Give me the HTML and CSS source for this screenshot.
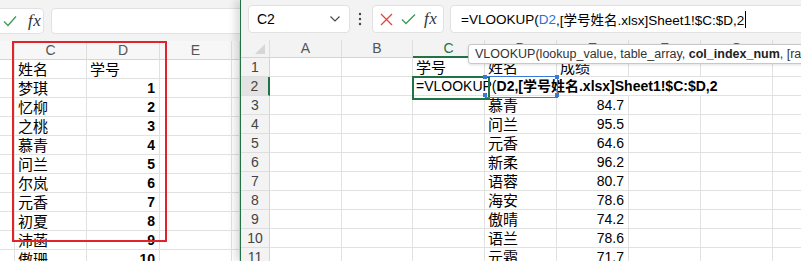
FILE: index.html
```html
<!DOCTYPE html>
<html lang="zh-CN">
<head>
    <meta charset="UTF-8">
    <title>VLOOKUP 跨工作簿</title>
    <link rel="stylesheet" href="styles.css">
</head>
<body>
<div class="screen">

    <!-- Left workbook: 学号姓名.xlsx -->
    <div class="win win-left">
        <div class="fbar">
            <div class="fx-box">
                <svg class="ico" width="14" height="12" viewBox="0 0 14 12"><path d="M1 6.5 L5 10.5 L13 1.5" fill="none" stroke="#3a9a55" stroke-width="1.3"/></svg>
                <span class="fx">fx</span>
            </div>
            <div class="f-input"></div>
        </div>
        <div class="grid grid-left">
            <div class="hd"></div><div class="hd">C</div><div class="hd">D</div><div class="hd">E</div><div class="hd"></div>

            <div class="c"></div><div class="c cjk">姓名</div><div class="c cjk">学号</div><div class="c"></div><div class="c"></div>
            <div class="c"></div><div class="c cjk">梦琪</div><div class="c num bold">1</div><div class="c"></div><div class="c"></div>
            <div class="c"></div><div class="c cjk">忆柳</div><div class="c num bold">2</div><div class="c"></div><div class="c"></div>
            <div class="c"></div><div class="c cjk">之桃</div><div class="c num bold">3</div><div class="c"></div><div class="c"></div>
            <div class="c"></div><div class="c cjk">慕青</div><div class="c num bold">4</div><div class="c"></div><div class="c"></div>
            <div class="c"></div><div class="c cjk">问兰</div><div class="c num bold">5</div><div class="c"></div><div class="c"></div>
            <div class="c"></div><div class="c cjk">尔岚</div><div class="c num bold">6</div><div class="c"></div><div class="c"></div>
            <div class="c"></div><div class="c cjk">元香</div><div class="c num bold">7</div><div class="c"></div><div class="c"></div>
            <div class="c"></div><div class="c cjk">初夏</div><div class="c num bold">8</div><div class="c"></div><div class="c"></div>
            <div class="c"></div><div class="c cjk">沛菡</div><div class="c num bold">9</div><div class="c"></div><div class="c"></div>
            <div class="c"></div><div class="c cjk">傲珊</div><div class="c num bold">10</div><div class="c"></div><div class="c"></div>
        </div>
        <div class="mark-red"></div>
    </div>

    <!-- Right workbook: 成绩 -->
    <div class="win win-right">
        <div class="fbar">
            <div class="namebox">
                <span>C2</span>
                <svg width="12" height="8" viewBox="0 0 12 8"><path d="M1.5 1.5 L6 6 L10.5 1.5" fill="none" stroke="#444" stroke-width="1.1"/></svg>
            </div>
            <svg class="dots" width="4" height="16" viewBox="0 0 4 16"><circle cx="2" cy="3" r="1.2" fill="#444"/><circle cx="2" cy="8" r="1.2" fill="#444"/><circle cx="2" cy="13" r="1.2" fill="#444"/></svg>
            <div class="fx-box fx-box-r">
                <svg class="ico" width="13" height="13" viewBox="0 0 13 13"><path d="M1 1 L12 12 M12 1 L1 12" fill="none" stroke="#e0453f" stroke-width="1.3"/></svg>
                <svg class="ico" width="15" height="12" viewBox="0 0 15 12"><path d="M1 6.5 L5 10.5 L14 1.5" fill="none" stroke="#3a9a55" stroke-width="1.3"/></svg>
                <span class="fx">fx</span>
            </div>
            <div class="f-input f-input-r">=VLOOKUP(<span class="ref">D2</span>,[学号姓名.xlsx]Sheet1!$C:$D,2<span class="caret"></span></div>
        </div>

        <div class="tip">VLOOKUP(lookup_value, table_array, <b>col_index_num</b>, [range_lookup])</div>

        <div class="grid grid-right">
            <div class="hd corner"><span class="tri"></span></div>
            <div class="hd">A</div><div class="hd">B</div><div class="hd hd-sel">C</div><div class="hd">D</div><div class="hd">E</div><div class="hd">F</div><div class="hd">G</div><div class="hd">H</div>

            <div class="rh">1</div><div class="c"></div><div class="c"></div><div class="c cjk">学号</div><div class="c cjk">姓名</div><div class="c cjk">成绩</div><div class="c"></div><div class="c"></div><div class="c"></div>
            <div class="rh rh-sel">2</div><div class="c"></div><div class="c"></div>
            <div class="c edit">=VLOOKUP(<b>D2,[学号姓名.xlsx]Sheet1!$C:$D,2</b>
                <i class="hdl hdl-tl"></i><i class="hdl hdl-tr"></i><i class="hdl hdl-bl"></i><i class="hdl hdl-br"></i>
            </div>
            <div class="c"></div><div class="c"></div>
            <div class="rh">3</div><div class="c"></div><div class="c"></div><div class="c"></div><div class="c cjk">慕青</div><div class="c num">84.7</div><div class="c"></div><div class="c"></div><div class="c"></div>
            <div class="rh">4</div><div class="c"></div><div class="c"></div><div class="c"></div><div class="c cjk">问兰</div><div class="c num">95.5</div><div class="c"></div><div class="c"></div><div class="c"></div>
            <div class="rh">5</div><div class="c"></div><div class="c"></div><div class="c"></div><div class="c cjk">元香</div><div class="c num">64.6</div><div class="c"></div><div class="c"></div><div class="c"></div>
            <div class="rh">6</div><div class="c"></div><div class="c"></div><div class="c"></div><div class="c cjk">新柔</div><div class="c num">96.2</div><div class="c"></div><div class="c"></div><div class="c"></div>
            <div class="rh">7</div><div class="c"></div><div class="c"></div><div class="c"></div><div class="c cjk">语蓉</div><div class="c num">80.7</div><div class="c"></div><div class="c"></div><div class="c"></div>
            <div class="rh">8</div><div class="c"></div><div class="c"></div><div class="c"></div><div class="c cjk">海安</div><div class="c num">78.6</div><div class="c"></div><div class="c"></div><div class="c"></div>
            <div class="rh">9</div><div class="c"></div><div class="c"></div><div class="c"></div><div class="c cjk">傲晴</div><div class="c num">74.2</div><div class="c"></div><div class="c"></div><div class="c"></div>
            <div class="rh">10</div><div class="c"></div><div class="c"></div><div class="c"></div><div class="c cjk">语兰</div><div class="c num">78.6</div><div class="c"></div><div class="c"></div><div class="c"></div>
            <div class="rh">11</div><div class="c"></div><div class="c"></div><div class="c"></div><div class="c cjk">元霜</div><div class="c num">71.7</div><div class="c"></div><div class="c"></div><div class="c"></div>
        </div>
    </div>

</div>
</body>
</html>
```

FILE: styles.css
```css
* {
    margin: 0;
    padding: 0;
    box-sizing: border-box;
}

body {
    width: 801px;
    height: 261px;
    overflow: hidden;
    background: #fff;
    font-family: "Liberation Sans", "Noto Sans CJK SC", sans-serif;
    color: #000;
}

.screen {
    display: flex;
    width: 801px;
    height: 261px;
    overflow: hidden;
}

.win {
    position: relative;
    background: #f3f3f3;
    overflow: hidden;
}

.win-left {
    width: 240px;
    flex: none;
}

.win-right {
    flex: 1;
    border-left: 1px solid #217346;
    box-shadow: -5px 0 7px rgba(0, 0, 0, 0.13);
}

/* Formula bar */
.fbar {
    display: flex;
    align-items: center;
    height: 41px;
    padding: 8px 0 7px 0;
}

.win-right .fbar {
    height: 40px;
    padding: 5px 0 7px 7px;
}

.fx-box {
    display: flex;
    align-items: center;
    gap: 11px;
    height: 100%;
    width: 52px;
    margin-left: -8px;
    padding-left: 10px;
    background: #fff;
    border: 1px solid #e1e1e1;
    border-radius: 4px;
}

.fx {
    font-family: "Liberation Serif", serif;
    font-style: italic;
    font-size: 17px;
    color: #333;
    letter-spacing: 0.5px;
}

.f-input {
    flex: 1;
    height: 100%;
    margin-left: 7px;
    margin-right: -10px;
    background: #fff;
    border: 1px solid #e1e1e1;
    border-radius: 4px;
}

.namebox {
    display: flex;
    align-items: center;
    justify-content: space-between;
    width: 102px;
    height: 100%;
    padding: 0 8px 0 8px;
    background: #fff;
    border: 1px solid #e1e1e1;
    border-radius: 4px;
    font-size: 14px;
}

.dots {
    margin: 0 10px 0 8px;
}

.fx-box-r {
    width: 72px;
    margin-left: 0;
    padding-left: 7px;
    gap: 8px;
}

.f-input-r {
    display: flex;
    align-items: center;
    margin-left: 6px;
    padding-left: 10px;
    font-size: 13.5px;
    white-space: nowrap;
}

.ref {
    color: #2f6fd0;
}

.caret {
    display: inline-block;
    width: 1px;
    height: 17px;
    margin-left: 1px;
    background: #000;
}

/* Sheet grid */
.grid {
    display: grid;
    background: #fff;
    grid-auto-rows: 19px;
}

.grid-left {
    grid-template-columns: 15px 72px 73px 72px 8px;
    grid-template-rows: 19px;
}

.grid-right {
    grid-template-columns: 29px 72px 71px 72px 72px 72px 72px 72px 72px;
    grid-template-rows: 18px;
}

.hd {
    background: #f7f7f7;
    border-right: 1px solid #dedede;
    border-bottom: 1px solid #d4d4d4;
    text-align: center;
    font-size: 14px;
    line-height: 18px;
    color: #555;
}

.grid-right .hd {
    line-height: 17px;
    background: #f3f3f3;
}

.hd-sel {
    background: #e3e3e3;
    color: #217346;
    border-bottom: 2px solid #217346;
}

.corner {
    position: relative;
}

.tri {
    position: absolute;
    right: 4px;
    bottom: 3px;
    width: 0;
    height: 0;
    border-left: 10px solid transparent;
    border-bottom: 10px solid #d6d6d6;
}

.rh {
    background: #f3f3f3;
    border-right: 1px solid #d4d4d4;
    border-bottom: 1px solid #dedede;
    text-align: center;
    font-size: 14px;
    line-height: 19px;
    color: #444;
}

.rh-sel {
    background: #e3e3e3;
    border-right: 2px solid #217346;
}

.c {
    border-right: 1px solid #e1e1e1;
    border-bottom: 1px solid #e1e1e1;
    padding: 0 3px;
    font-size: 14px;
    line-height: 19px;
    white-space: nowrap;
}

.cjk {
    font-size: 15px;
}

.num {
    text-align: right;
    padding-right: 4px;
}

.bold {
    font-weight: bold;
}

/* Cell being edited: text runs over C2:F2 */
.edit {
    grid-column: span 4;
    position: relative;
    border-right: none;
    padding-left: 3px;
    font-size: 14px;
}

.edit::before {
    content: "";
    position: absolute;
    left: -1px;
    top: -1px;
    width: 74px;
    height: 20px;
    border: 2px solid #217346;
}

.edit::after {
    content: "";
    position: absolute;
    left: 72px;
    top: -1px;
    width: 72px;
    height: 20px;
    border: 1px solid #3c78d8;
    border-left: none;
}

.edit b {
    font-weight: bold;
}

/* corner handles of the referenced range D2 */
.hdl {
    position: absolute;
    width: 4px;
    height: 4px;
    background: #3c78d8;
}

.hdl-tl { left: 70px; top: -2px; }
.hdl-tr { left: 142px; top: -2px; }
.hdl-bl { left: 70px; bottom: -2px; }
.hdl-br { left: 142px; bottom: -2px; }

/* Marked range on the left workbook */
.mark-red {
    position: absolute;
    left: 12px;
    top: 41px;
    width: 155px;
    height: 201px;
    border: 2px solid #e3232b;
}

/* Function tooltip */
.tip {
    position: absolute;
    left: 227px;
    top: 44px;
    z-index: 3;
    height: 20px;
    padding: 0 6px;
    background: #fff;
    border: 1px solid #c8c8c8;
    border-radius: 3px;
    box-shadow: 0 1px 3px rgba(0, 0, 0, 0.12);
    font-size: 12.5px;
    line-height: 18px;
    color: #333;
    white-space: nowrap;
}

.tip b {
    color: #222;
}
```
